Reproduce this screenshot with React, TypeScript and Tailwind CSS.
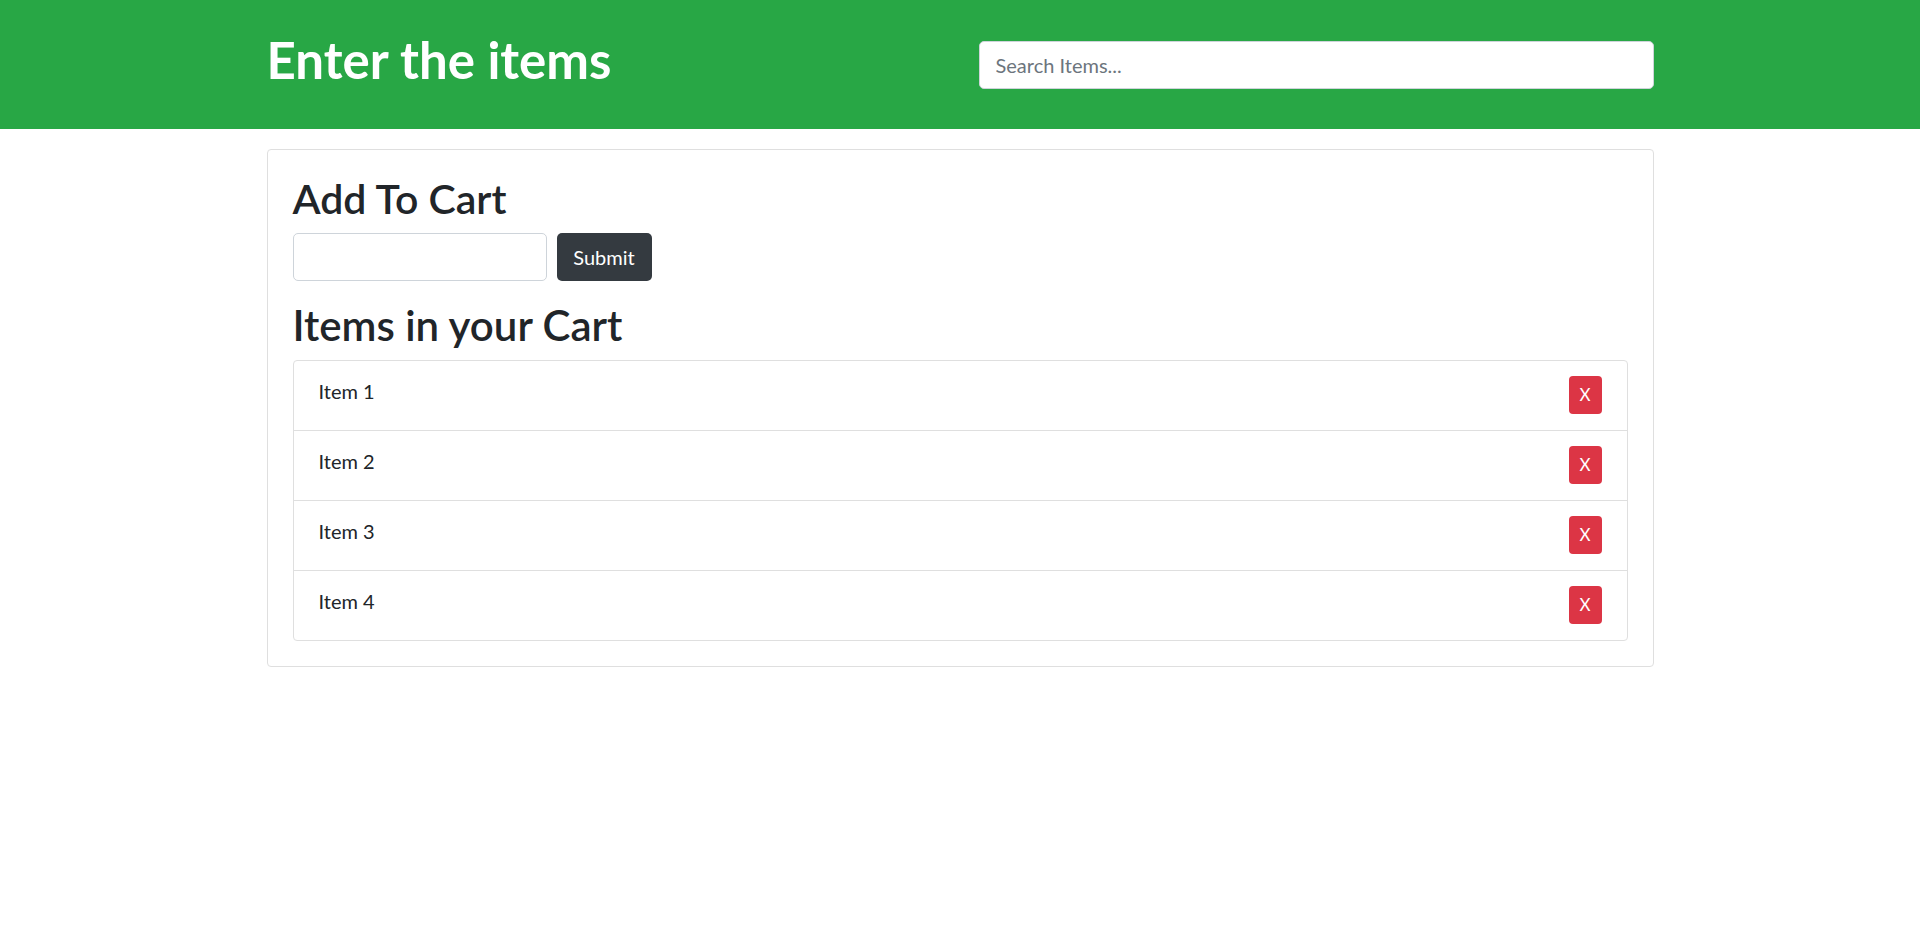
import { useState } from 'react';

const font = { fontFamily: 'Lato, "Noto Sans", sans-serif' };

const App = () => {
    const [items, setItems] = useState(["Item 1", "Item 2", "Item 3", "Item 4"]);
    const [text, setText] = useState("");

    const addItem = () => {
        if (!text.trim()) return;
        setItems([...items, text]);
        setText("");
    };

    return (
        <div className="min-h-screen bg-white text-[#212529]" style={font}>
            {/* header */}
            <div className="bg-[#28a745] h-[129px]">
                <div className="w-[1387px] mx-auto h-full flex items-center justify-between">
                    <h1 className="text-white text-[51px] font-bold leading-[60px] mb-[9px]">Enter the items</h1>
                    <input
                        className="w-[675px] h-[48px] bg-white rounded-[5px] border border-[#ced4da] px-4 text-[20px] outline-none placeholder:text-[#6c757d]"
                        placeholder="Search Items..."
                    />
                </div>
            </div>

            {/* cart card */}
            <div className="w-[1387px] mx-auto mt-[20px] border border-[#dfdfdf] rounded-[4px] p-[25px]">
                <h1 className="text-[41px] font-semibold leading-[48px]">Add To Cart</h1>
                <div className="flex gap-[10px] mt-[10px]">
                    <input
                        className="w-[254px] h-[48px] rounded-[5px] border border-[#ced4da] px-4 text-[20px] outline-none"
                        value={text}
                        onChange={(e) => setText(e.target.value)}
                    />
                    <button
                        className="w-[95px] h-[48px] rounded-[5px] bg-[#343a40] text-white text-[20px]"
                        onClick={addItem}
                    >
                        Submit
                    </button>
                </div>

                <h1 className="text-[42px] font-semibold leading-[48px] mt-[20px]">Items in your Cart</h1>
                <div className="mt-[11px] border border-[#dfdfdf] rounded-[4px]">
                    {items.map((item, i) => (
                        <div
                            key={i}
                            className={"flex justify-between items-start px-[25px] pt-[15px] pb-[16px] " + (i > 0 ? "border-t border-[#dfdfdf]" : "")}
                        >
                            <span className="text-[20px] leading-[30px]">{item}</span>
                            <button
                                className="w-[33px] h-[38px] rounded-[4px] bg-[#dc3545] text-white text-[17px]"
                                onClick={() => setItems(items.filter((_, j) => j !== i))}
                            >
                                X
                            </button>
                        </div>
                    ))}
                </div>
            </div>
        </div>
    );
};

export default App;
